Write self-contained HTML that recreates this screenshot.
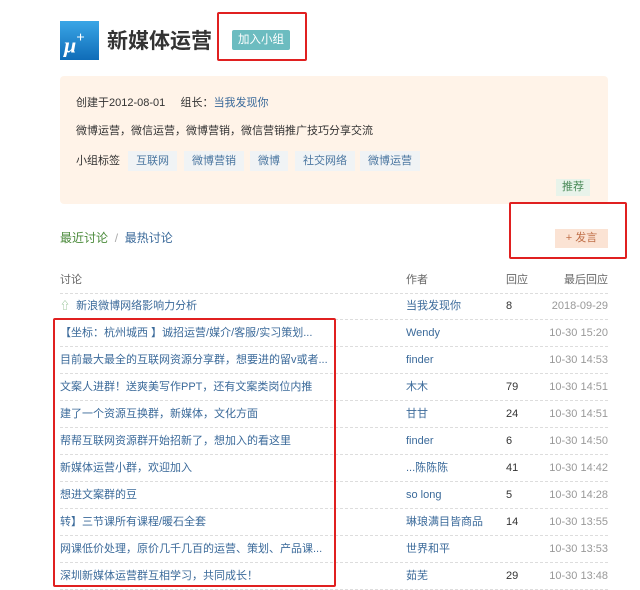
<!DOCTYPE html>
<html><head><meta charset="utf-8"><style>
*{margin:0;padding:0;box-sizing:border-box}
body{width:640px;height:590px;background:#fff;position:relative;overflow:hidden;font-family:"Liberation Sans","Noto Sans CJK SC",sans-serif;font-size:11px;color:#333}
.a{position:absolute;white-space:nowrap;line-height:16px}
.l{color:#3b6a9a}
.red{position:absolute;border:2px solid #e02020;border-radius:2px}
.row{position:absolute;left:60px;width:548px;height:27px;border-bottom:1px dashed #ddd}
.row span{position:absolute;top:0;line-height:26px;white-space:nowrap}
.t{left:0;color:#3b6a9a}.au{left:346px;color:#3b6a9a}.n{left:446px;color:#333}.d{right:0;color:#999}
.tag{position:absolute;top:151px;height:20px;background:#f0f3f5;color:#4a76a0;padding:0 8px;line-height:20px}
</style></head><body>
<div class="a" style="left:60px;top:21px;width:39px;height:39px;background:linear-gradient(#3aa6e6,#0f6cb8);color:#fff;font:italic bold 22px 'Liberation Serif',serif;padding:8px 0 0 4px;line-height:22px">μ<sup style="font-size:15px;font-style:normal;position:relative;top:-2px">+</sup></div>
<div class="a" style="left:107px;top:29px;font-size:21px;line-height:26px;font-weight:bold;color:#333">新媒体运营</div>
<div class="a" style="left:232px;top:30px;width:58px;height:20px;background:#6cbcc0;color:#fff;border-radius:2px;text-align:center;line-height:20px;font-size:11.5px">加入小组</div>
<div class="red" style="left:217px;top:12px;width:90px;height:49px"></div>
<div class="a" style="left:60px;top:76px;width:548px;height:128px;background:#fff3e8;border-radius:4px"></div>
<div class="a" style="left:76px;top:95px">创建于2012-08-01 &nbsp; &nbsp; 组长：<span class="l">当我发现你</span></div>
<div class="a" style="left:76px;top:123px">微博运营，微信运营，微博营销，微信营销推广技巧分享交流</div>
<div class="a" style="left:76px;top:153px">小组标签</div>
<div class="tag" style="left:128px">互联网</div>
<div class="tag" style="left:184px">微博营销</div>
<div class="tag" style="left:250px">微博</div>
<div class="tag" style="left:295px">社交网络</div>
<div class="tag" style="left:360px">微博运营</div>
<div class="a" style="left:556px;top:179px;height:17px;padding:0 6px;background:#e8f3ea;color:#4a8a58;line-height:17px">推荐</div>
<div class="a" style="left:60px;top:230px;font-size:12px"><span style="color:#4a8a3a">最近讨论</span> <span style="color:#aaa">&nbsp;/&nbsp;</span> <span class="l">最热讨论</span></div>
<div class="a" style="left:555px;top:229px;width:53px;height:19px;background:#fbe3d4;color:#c0704a;text-align:center;line-height:19px">+ 发言</div>
<div class="red" style="left:509px;top:202px;width:118px;height:57px"></div>
<div class="row" style="top:267px"><span class="t" style="color:#666">讨论</span><span class="au" style="color:#666">作者</span><span class="n" style="color:#666">回应</span><span class="d" style="color:#666">最后回应</span></div>
<div class="row" style="top:293px"><span class="t"><span style="position:static;color:#8b8;font-size:10px">⇧</span> &nbsp;新浪微博网络影响力分析</span><span class="au">当我发现你</span><span class="n">8</span><span class="d">2018-09-29</span></div>
<div class="row" style="top:320px"><span class="t">【坐标：杭州城西 】诚招运营/媒介/客服/实习策划...</span><span class="au">Wendy</span><span class="n"></span><span class="d">10-30 15:20</span></div>
<div class="row" style="top:347px"><span class="t">目前最大最全的互联网资源分享群，想要进的留v或者...</span><span class="au">finder</span><span class="n"></span><span class="d">10-30 14:53</span></div>
<div class="row" style="top:374px"><span class="t">文案人进群！送爽美写作PPT，还有文案类岗位内推</span><span class="au">木木</span><span class="n">79</span><span class="d">10-30 14:51</span></div>
<div class="row" style="top:401px"><span class="t">建了一个资源互换群，新媒体，文化方面</span><span class="au">甘甘</span><span class="n">24</span><span class="d">10-30 14:51</span></div>
<div class="row" style="top:428px"><span class="t">帮帮互联网资源群开始招新了，想加入的看这里</span><span class="au">finder</span><span class="n">6</span><span class="d">10-30 14:50</span></div>
<div class="row" style="top:455px"><span class="t">新媒体运营小群，欢迎加入</span><span class="au">...陈陈陈</span><span class="n">41</span><span class="d">10-30 14:42</span></div>
<div class="row" style="top:482px"><span class="t">想进文案群的豆</span><span class="au">so long</span><span class="n">5</span><span class="d">10-30 14:28</span></div>
<div class="row" style="top:509px"><span class="t">转】三节课所有课程/暖石全套</span><span class="au">琳琅满目皆商品</span><span class="n">14</span><span class="d">10-30 13:55</span></div>
<div class="row" style="top:536px"><span class="t">网课低价处理，原价几千几百的运营、策划、产品课...</span><span class="au">世界和平</span><span class="n"></span><span class="d">10-30 13:53</span></div>
<div class="row" style="top:563px"><span class="t">深圳新媒体运营群互相学习，共同成长！</span><span class="au">茹芜</span><span class="n">29</span><span class="d">10-30 13:48</span></div>
<div class="red" style="left:53px;top:318px;width:283px;height:269px"></div>
</body></html>
